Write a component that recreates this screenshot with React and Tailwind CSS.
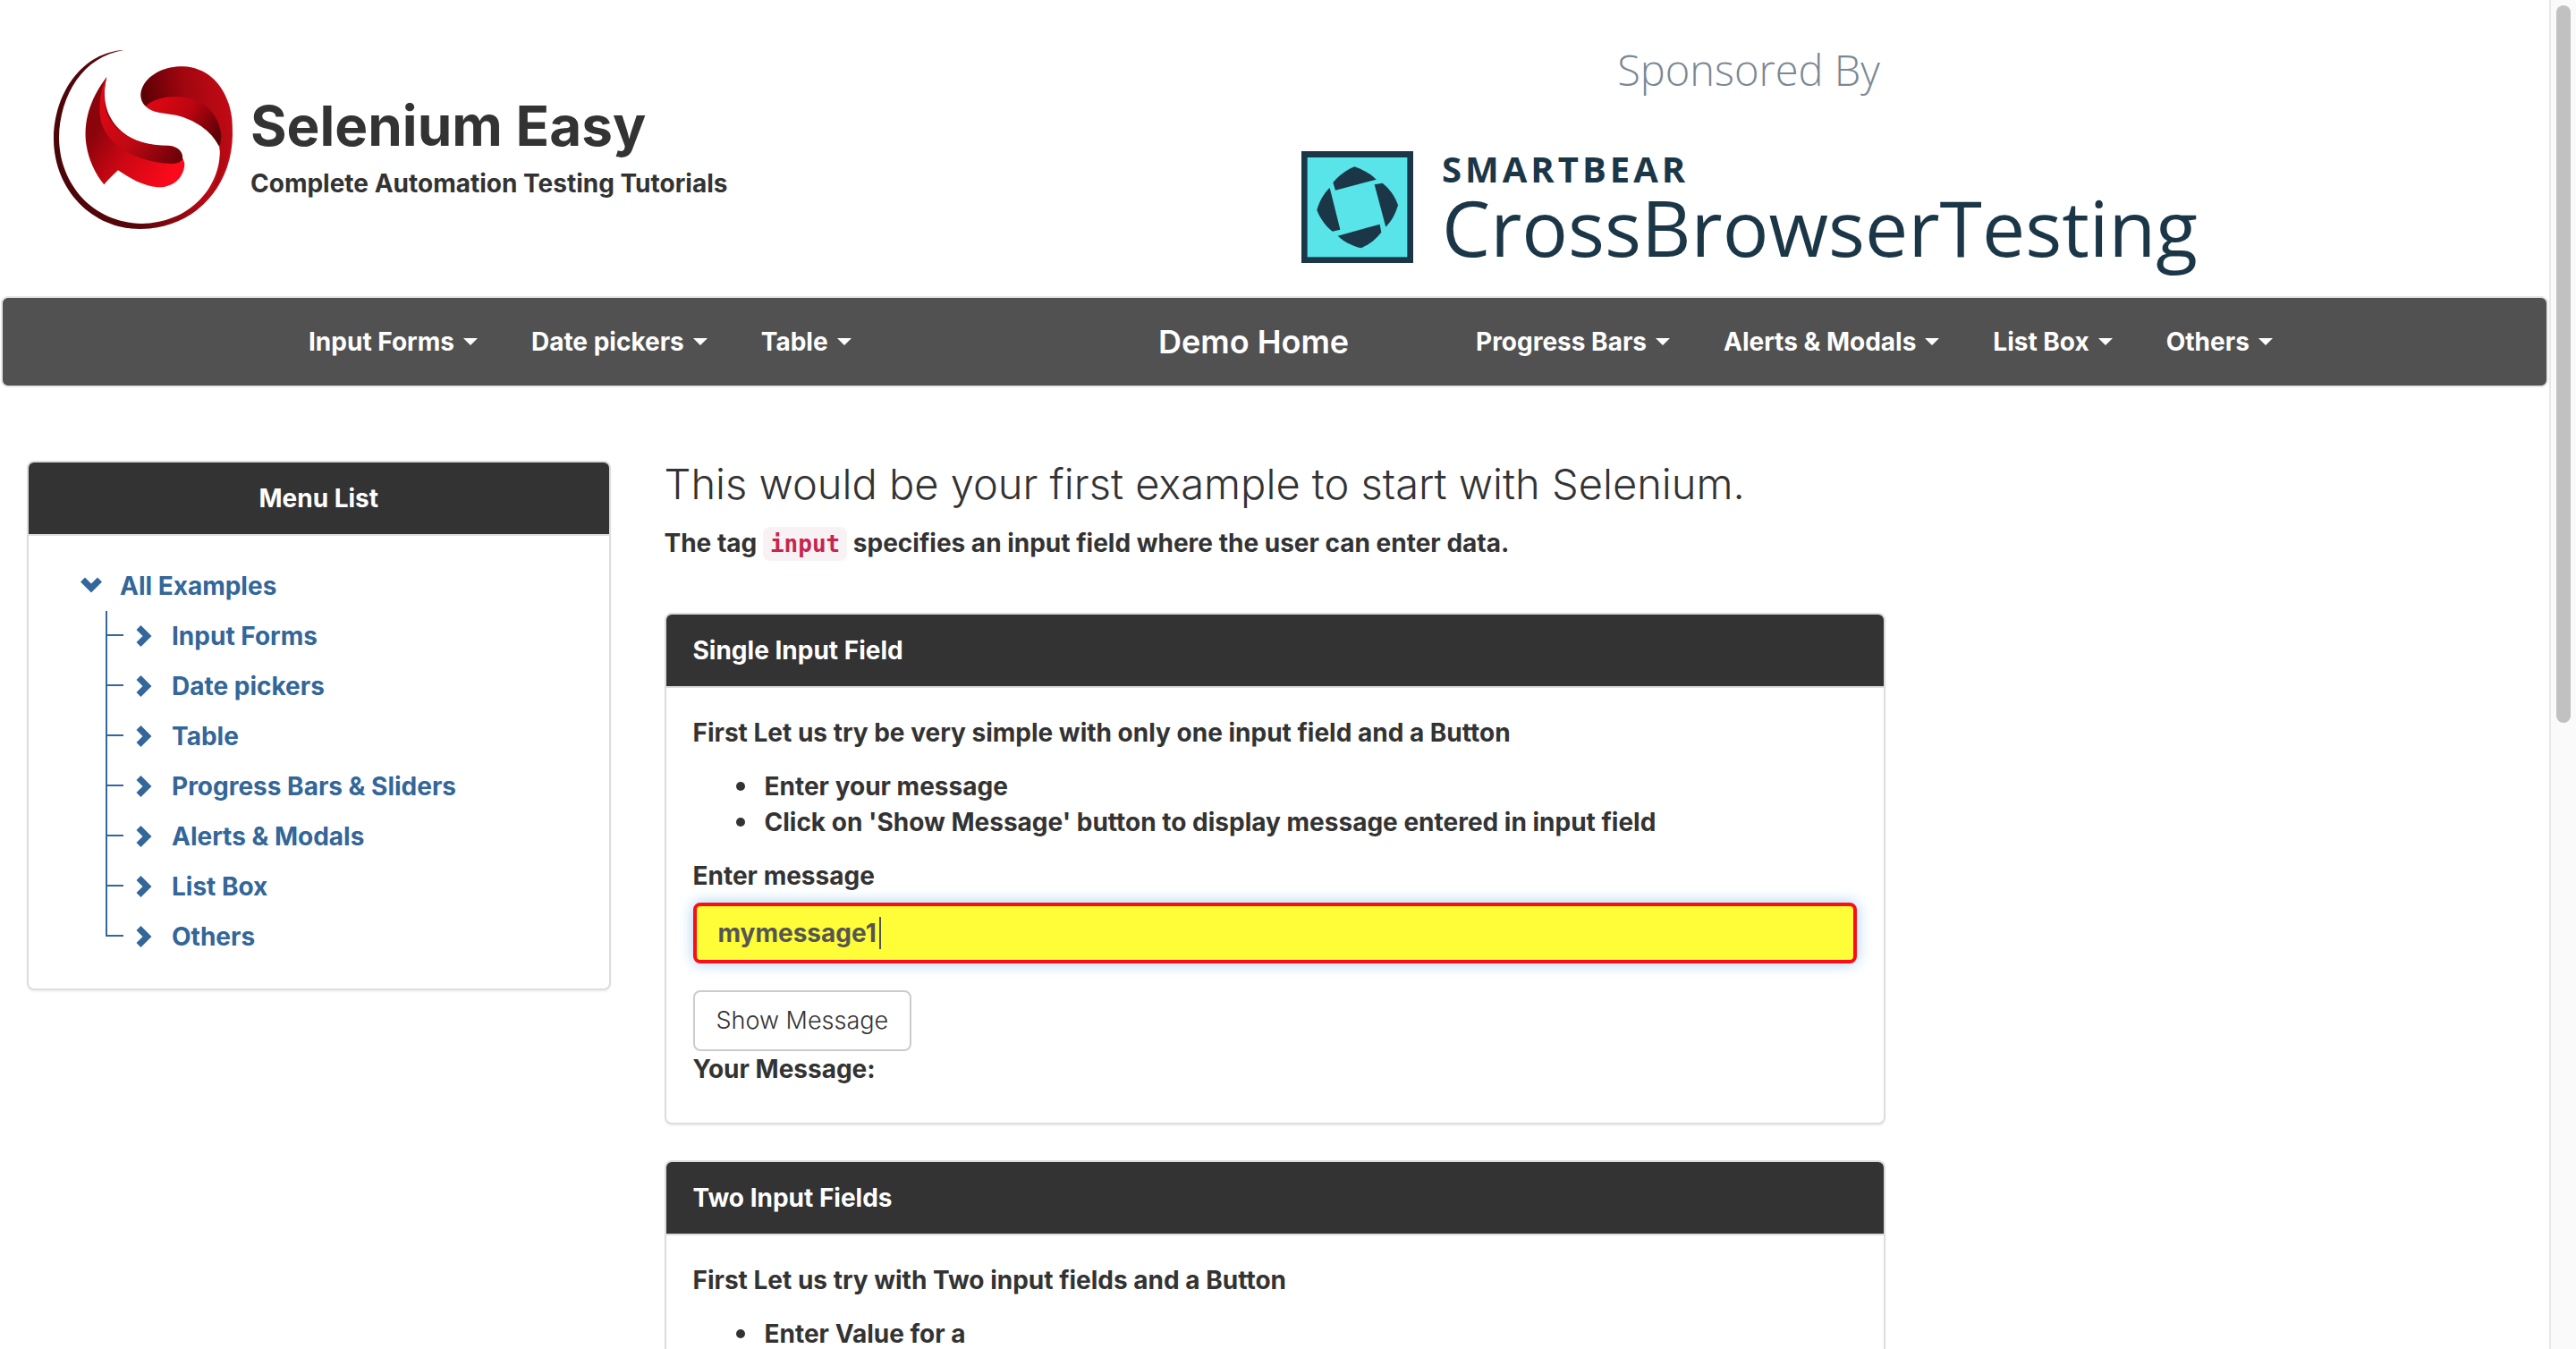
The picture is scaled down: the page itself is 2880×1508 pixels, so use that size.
const leftNav = ["Input Forms", "Date pickers", "Table"];
const rightNav = ["Progress Bars", "Alerts & Modals", "List Box", "Others"];
const treeItems = [
  "Input Forms",
  "Date pickers",
  "Table",
  "Progress Bars & Sliders",
  "Alerts & Modals",
  "List Box",
  "Others",
];

function SeleniumLogo() {
  return (
    <svg viewBox="30 30 600 600" className="h-[200px] w-[200px] shrink-0" aria-hidden="true">
      <defs>
        <linearGradient id="ring" gradientUnits="userSpaceOnUse" x1="30" y1="420" x2="630" y2="300">
          <stop offset="0" stopColor="#4a0509" />
          <stop offset="0.4" stopColor="#5a060b" />
          <stop offset="0.75" stopColor="#b00814" />
          <stop offset="1" stopColor="#c9101a" />
        </linearGradient>
        <linearGradient id="top" gradientUnits="userSpaceOnUse" x1="340" y1="200" x2="600" y2="150">
          <stop offset="0" stopColor="#5e0006" />
          <stop offset="0.5" stopColor="#a0060f" />
          <stop offset="1" stopColor="#c00a15" />
        </linearGradient>
        <linearGradient id="fold" gradientUnits="userSpaceOnUse" x1="390" y1="200" x2="590" y2="310">
          <stop offset="0" stopColor="#d80713" />
          <stop offset="0.45" stopColor="#b90510" />
          <stop offset="1" stopColor="#5c0006" />
        </linearGradient>
        <linearGradient id="bottom" gradientUnits="userSpaceOnUse" x1="150" y1="330" x2="400" y2="480">
          <stop offset="0" stopColor="#8a040c" />
          <stop offset="0.45" stopColor="#cc0713" />
          <stop offset="1" stopColor="#fa0a1a" />
        </linearGradient>
        <linearGradient id="band" gradientUnits="userSpaceOnUse" x1="200" y1="180" x2="460" y2="400">
          <stop offset="0" stopColor="#e00814" />
          <stop offset="0.5" stopColor="#c00813" />
          <stop offset="1" stopColor="#670208" />
        </linearGradient>
      </defs>
      <path fill="url(#ring)" d="M266 30C130 36 30 170 30 330C32 500 160 630 320 630C500 630 630 490 630 310C628 270 622 240 612 210L570 230L588 370C585 500 480 610 325 612C160 608 50 480 48 325C50 180 130 50 266 30Z" />
      <path fill="url(#top)" d="M338 218C318 200 318 172 330 150C355 105 410 84 465 85C550 88 615 155 628 260C636 350 605 450 560 510C583 450 592 395 586 350C560 300 450 190 338 218Z" />
      <path fill="url(#fold)" d="M338 218C370 190 420 182 470 188C540 198 590 255 592 320C590 345 588 350 584 352C560 300 500 262 440 248C400 240 360 242 338 218Z" />
      <path fill="url(#bottom)" d="M208 120C150 195 128 275 140 350C148 400 170 445 199 481C215 462 230 448 246 433C285 460 330 486 380 490C435 490 468 455 469 410C460 370 430 350 380 350C260 340 175 250 208 120Z" />
      <path fill="url(#band)" d="M208 120C188 205 205 260 250 300C295 335 350 350 415 350C450 352 466 375 462 395C455 410 430 414 390 408C310 396 220 360 190 275C178 225 185 165 208 120Z" />
    </svg>
  );
}

function CrossBrowserMark() {
  return (
    <svg viewBox="30 25 375 375" className="h-[125px] w-[125px] shrink-0" aria-hidden="true">
      <rect x="30" y="25" width="375" height="375" fill="#1b3747" />
      <rect x="50" y="46" width="335" height="334" fill="#58e4e8" />
      <g fill="#1b3747">
        <path d="M136 130C155 108 180 88 208 77C235 86 260 100 281 120L144 156Z" />
        <path d="M275 137L302 132C325 150 345 178 354 206C346 235 332 260 313 279Z" />
        <path d="M293 270L298 297C278 322 255 340 228 350C200 342 172 328 152 309Z" />
        <path d="M125 148L160 288L134 294C112 277 92 250 82 222C90 194 104 168 125 148Z" />
      </g>
    </svg>
  );
}

function NavLink({ label }) {
  return (
    <a href="#" className="flex items-center gap-2.5 whitespace-nowrap px-[30px]">
      {label}
      <span className="h-0 w-0 border-x-8 border-t-8 border-x-transparent border-t-white" />
    </a>
  );
}

function Chevron({ down }) {
  return down ? (
    <svg viewBox="0 0 24 24" className="h-6 w-6" aria-hidden="true">
      <path d="M2.5 5L12 14.5L21.5 5" fill="none" stroke="currentColor" strokeWidth="7" />
    </svg>
  ) : (
    <svg viewBox="0 0 24 24" className="h-6 w-6" aria-hidden="true">
      <path d="M5 2.5L14.5 12L5 21.5" fill="none" stroke="currentColor" strokeWidth="7" />
    </svg>
  );
}

function Panel({ title, centered, children }) {
  return (
    <section className="rounded-lg border-2 border-[#ddd] bg-white shadow-[0_2px_2px_rgba(0,0,0,0.05)]">
      <h3
        className={
          "rounded-t-md border-b-2 border-[#ddd] bg-[#333] px-[30px] py-5 leading-10 text-white " +
          (centered ? "text-center" : "")
        }
      >
        {title}
      </h3>
      {children}
    </section>
  );
}

function BulletList({ items }) {
  return (
    <ul className="py-5 pl-12">
      {items.map((item) => (
        <li
          key={item}
          className="flex items-center before:mr-[22px] before:size-2.5 before:rounded-full before:bg-current"
        >
          {item}
        </li>
      ))}
    </ul>
  );
}

export default function App() {
  return (
    <div className="flex h-screen overflow-hidden bg-white font-['Inter',sans-serif] text-[28px] leading-10 font-bold text-[#333]">
      <div className="min-w-0 flex-1">
        <header className="grid h-[331px] grid-cols-2">
          <div className="flex items-start gap-5 pt-14 pl-[60px]">
            <SeleniumLogo />
            <div className="pt-[49px]">
              <h1 className="text-[62px] leading-[72px]">Selenium Easy</h1>
              <p className="pt-2">Complete Automation Testing Tutorials</p>
            </div>
          </div>
          <div className="flex w-[1060px] flex-col px-[30px] pt-[46px] font-['Open_Sans',sans-serif] text-[#1b3747]">
            <p className="text-center text-[47px] leading-[64px] font-light text-[#7a8895]">Sponsored By</p>
            <div className="flex gap-8 pt-[59px]">
              <CrossBrowserMark />
              <div>
                <p className="text-[40px] leading-[40px] tracking-widest">SMARTBEAR</p>
                <p className="text-[86px] leading-[90px] font-normal">CrossBrowserTesting</p>
              </div>
            </div>
          </div>
        </header>

        <nav className="mx-px grid grid-cols-[950fr_355fr_1227fr] items-center rounded-lg border-2 border-[#e7e7e7] bg-[#515151] pl-[312px] text-white">
          <div className="flex h-[98px] items-center">
            {leftNav.map((label) => (
              <NavLink key={label} label={label} />
            ))}
          </div>
          <a href="#" className="pl-[30px] text-[36px] font-semibold whitespace-nowrap">
            Demo Home
          </a>
          <div className="flex items-center">
            {rightNav.map((label) => (
              <NavLink key={label} label={label} />
            ))}
          </div>
        </nav>

        <div className="grid grid-cols-4 pt-[82px]">
          <aside className="px-[30px]">
            <Panel title="Menu List" centered>
              <div className="pt-9 pb-[30px] pl-[58px] text-[#336699]">
                <a href="#" className="flex items-center gap-5">
                  <Chevron down />
                  All Examples
                </a>
                <ul className="pt-2 pl-7">
                  {treeItems.map((label, i) => (
                    <li key={label} className="flex h-14">
                      <span className="flex w-5 flex-col" aria-hidden="true">
                        <span className="h-7 border-b-2 border-l-2 border-[#336699]" />
                        <span
                          className={
                            i === treeItems.length - 1 ? "h-7" : "h-7 border-l-2 border-[#336699]"
                          }
                        />
                      </span>
                      <a href="#" className="flex items-center gap-[18px] pl-3">
                        <Chevron />
                        {label}
                      </a>
                    </li>
                  ))}
                </ul>
              </div>
            </Panel>
          </aside>

          <main className="col-span-2 px-[30px]">
            <h2 className="text-[47px] leading-[52px] font-light">
              This would be your first example to start with Selenium.
            </h2>
            <p className="pt-5">
              The tag{" "}
              <code className="rounded-lg bg-[#f9f2f4] px-2 py-1 font-['DejaVu_Sans_Mono',monospace] text-[26px] leading-8 text-[#c7254e]">
                input
              </code>{" "}
              specifies an input field where the user can enter data.
            </p>

            <div className="flex flex-col gap-10 pt-[58px]">
              <Panel title="Single Input Field">
                <form className="px-[30px] pt-[30px] pb-10">
                  <p>First Let us try be very simple with only one input field and a Button</p>
                  <BulletList
                    items={[
                      "Enter your message",
                      "Click on 'Show Message' button to display message entered in input field",
                    ]}
                  />
                  <label htmlFor="message" className="block">
                    Enter message
                  </label>
                  <div className="relative mt-2.5 flex">
                    <input
                      id="message"
                      type="text"
                      defaultValue="mymessage1"
                      className="h-[68px] w-full rounded-lg border-4 border-[#fb0d1b] bg-[#fffd38] px-6 text-[#555] shadow-[0_0_16px_rgba(102,175,233,0.6)] outline-none"
                    />
                    <span className="absolute top-4 left-52 h-9 w-0.5 bg-[#555]" aria-hidden="true" />
                  </div>
                  <button
                    type="button"
                    className="mt-[30px] block h-[68px] rounded-lg border-2 border-[#ccc] bg-white px-6 text-[27px] font-light"
                  >
                    Show Message
                  </button>
                  <p>Your Message:</p>
                </form>
              </Panel>

              <Panel title="Two Input Fields">
                <div className="px-[30px] pt-[30px] pb-20">
                  <p>First Let us try with Two input fields and a Button</p>
                  <BulletList items={["Enter Value for a"]} />
                </div>
              </Panel>
            </div>
          </main>
        </div>
      </div>

      <div className="w-[30px] shrink-0 border-l-2 border-[#e8e8e8] bg-[#fafafa] px-1.5 pt-1.5" aria-hidden="true">
        <div className="h-[802px] w-4 rounded-full bg-[#c1c1c1]" />
      </div>
    </div>
  );
}
